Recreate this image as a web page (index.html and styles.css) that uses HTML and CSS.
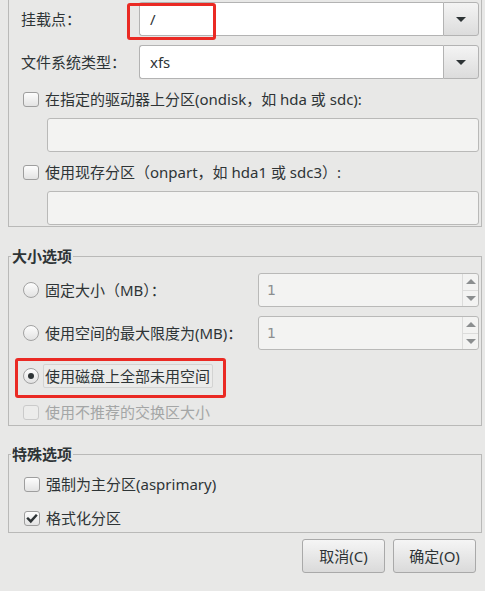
FILE: index.html
```html
<!DOCTYPE html>
<html lang="zh-CN">
<head>
<meta charset="utf-8">
<title>添加挂载点</title>
<link rel="stylesheet" href="styles.css">
</head>
<body>
<div class="frame-top">
  <div class="field-row">
    <span class="label">挂载点：</span>
    <div class="combo">
      <div class="combo-entry">/</div>
      <div class="combo-btn"><span class="tri-down"></span></div>
      <div class="annot annot-mount"></div>
    </div>
  </div>
  <div class="field-row gap9">
    <span class="label">文件系统类型：</span>
    <div class="combo">
      <div class="combo-entry">xfs</div>
      <div class="combo-btn"><span class="tri-down"></span></div>
    </div>
  </div>
  <div class="check-row gap10">
    <span class="check"></span>
    <span>在指定的驱动器上分区(ondisk，如 hda 或 sdc):</span>
  </div>
  <div class="entry gap9"></div>
  <div class="check-row gap10">
    <span class="check"></span>
    <span>使用现存分区（onpart，如 hda1 或 sdc3）:</span>
  </div>
  <div class="entry gap9"></div>
</div>

<fieldset class="group group-size">
  <legend>大小选项</legend>
  <div class="group-body size-body">
    <div class="size-row">
      <div class="radio-row"><span class="radio"></span><span>固定大小（MB）：</span></div>
      <div class="spin"><span class="spin-val">1</span><div class="spin-btns"><span class="spin-up"><span class="tri-up"></span></span><span class="spin-dn"><span class="tri-dn-grey"></span></span></div></div>
    </div>
    <div class="size-row gap9">
      <div class="radio-row"><span class="radio"></span><span>使用空间的最大限度为(MB)：</span></div>
      <div class="spin"><span class="spin-val">1</span><div class="spin-btns"><span class="spin-up"><span class="tri-up"></span></span><span class="spin-dn"><span class="tri-dn-grey"></span></span></div></div>
    </div>
    <div class="radio-row sel-row gap14">
      <span class="radio checked"></span><span class="focus-label">使用磁盘上全部未用空间</span>
      <div class="annot annot-radio"></div>
    </div>
    <div class="check-row disabled gap14">
      <span class="check"></span>
      <span>使用不推荐的交换区大小</span>
    </div>
  </div>
</fieldset>

<fieldset class="group group-special">
  <legend>特殊选项</legend>
  <div class="group-body special-body">
    <div class="check-row">
      <span class="check"></span>
      <span>强制为主分区(asprimary)</span>
    </div>
    <div class="check-row gap14">
      <span class="check"><svg width="15" height="15" viewBox="0 0 15 15"><path d="M3.2 7.6 L6.2 10.6 L11.8 4.4" fill="none" stroke="#2e3436" stroke-width="2.6" stroke-linecap="square"/></svg></span>
      <span>格式化分区</span>
    </div>
  </div>
</fieldset>

<div class="buttons">
  <button class="btn">取消(C)</button>
  <button class="btn">确定(O)</button>
</div>
</body>
</html>
```

FILE: styles.css
```css
html, body {
  margin: 0;
  padding: 0;
}
body {
  background: #e8e8e7;
  color: #2e3436;
  font-family: "Noto Sans", "Noto Sans CJK SC", sans-serif;
  font-size: 15px;
  line-height: 18px;
  width: 485px;
  height: 591px;
  overflow: hidden;
}

.gap9 { margin-top: 9px; }
.gap10 { margin-top: 10px; }
.gap14 { margin-top: 14px; }

/* top frame */
.frame-top {
  box-sizing: border-box;
  width: 474px;
  margin-left: 8px;
  border: 1px solid #b9b9b8;
  border-top: none;
  padding: 2px 2px 1px 12px;
}
.field-row {
  display: grid;
  grid-template-columns: 118px 1fr;
  align-items: center;
  height: 34px;
}
.combo {
  position: relative;
  display: flex;
  height: 34px;
}
.combo-entry {
  flex: 1;
  box-sizing: border-box;
  background: #ffffff;
  border: 1px solid #b3b3b3;
  border-right: none;
  border-radius: 3px 0 0 3px;
  padding-left: 10px;
  display: flex;
  align-items: center;
}
.combo-btn {
  box-sizing: border-box;
  width: 36px;
  border: 1px solid #b3b3b3;
  border-radius: 0 3px 3px 0;
  background: linear-gradient(#f4f4f4, #dcdcdc);
  display: flex;
  align-items: center;
  justify-content: center;
}
.tri-down {
  width: 0;
  height: 0;
  border-left: 5px solid transparent;
  border-right: 5px solid transparent;
  border-top: 5px solid #2e3436;
}

.annot {
  position: absolute;
  border: 3px solid #ea2a24;
  border-radius: 3px;
  box-sizing: border-box;
  pointer-events: none;
}
.annot-mount {
  left: -12px;
  top: 1px;
  width: 89px;
  height: 37px;
}

.check-row {
  display: flex;
  align-items: center;
  height: 20px;
  white-space: nowrap;
}
.check {
  box-sizing: border-box;
  width: 16px;
  height: 15px;
  margin: 0 6px 0 2px;
  border: 1px solid #9e9e9e;
  border-radius: 3px;
  background: linear-gradient(#fdfdfd, #e3e3e3);
  display: flex;
  align-items: center;
  justify-content: center;
  flex: none;
}
.check svg { display: block; }

.entry {
  box-sizing: border-box;
  height: 34px;
  margin-left: 26px;
  background: #f3f3f2;
  border: 1px solid #b9b9b8;
  border-radius: 3px;
}

/* group frames */
.group {
  box-sizing: border-box;
  width: 474px;
  margin: 0 0 0 8px;
  min-inline-size: 0;
  border: 1px solid #b9b9b8;
  padding: 0 2px 0 2px;
}
.group legend {
  font-weight: bold;
  padding: 0 1px;
  line-height: 18px;
  color: #2e3436;
}
.group-size { margin-top: 20px; }
.group-special { margin-top: 19px; }

.group-body { padding-left: 10px; }
.size-body { padding-top: 8px; padding-bottom: 3px; }
.special-body { padding-top: 11px; padding-bottom: 4px; padding-left: 13px; }
.special-body .check { margin-left: 0; margin-right: 6px; }

.size-row {
  display: grid;
  grid-template-columns: 1fr 221px;
  align-items: center;
  height: 34px;
}
.radio-row {
  display: flex;
  align-items: center;
  white-space: nowrap;
}
.sel-row {
  position: relative;
  height: 24px;
}
.radio {
  box-sizing: border-box;
  width: 16px;
  height: 16px;
  margin: 0 6px 0 2px;
  border: 1px solid #a2a2a2;
  border-radius: 50%;
  background: linear-gradient(#fdfdfd, #e2e2e2);
  flex: none;
  display: flex;
  align-items: center;
  justify-content: center;
}
.radio.checked::after {
  content: "";
  width: 6px;
  height: 6px;
  border-radius: 50%;
  background: #2e3436;
}
.focus-label {
  box-sizing: border-box;
  margin-left: -2px;
  height: 24px;
  padding: 0 2px 0 1px;
  border: 1px solid #d3d3d2;
  border-radius: 2px;
  background: #ebebea;
  display: flex;
  align-items: center;
}
.annot-radio {
  left: -6px;
  top: -6px;
  width: 211px;
  height: 40px;
}

.disabled { color: #a4a6a6; }
.disabled .check {
  border-color: #cacaca;
  background: #ececeb;
}

.spin {
  box-sizing: border-box;
  height: 34px;
  display: flex;
  background: #f3f3f2;
  border: 1px solid #b9b9b8;
  border-radius: 3px;
}
.spin-val {
  flex: 1;
  padding-left: 8px;
  display: flex;
  align-items: center;
  color: #8b8e8f;
  font-family: "DejaVu Sans", sans-serif;
  font-size: 14px;
}
.spin-btns {
  width: 15px;
  border-left: 1px solid #dcdcdb;
  display: flex;
  flex-direction: column;
}
.spin-up, .spin-dn {
  flex: 1;
  display: flex;
  align-items: center;
  justify-content: center;
}
.spin-up { border-bottom: 1px solid #dcdcdb; }
.tri-up {
  width: 0;
  height: 0;
  border-left: 5px solid transparent;
  border-right: 5px solid transparent;
  border-bottom: 5px solid #8b8e8f;
}
.tri-dn-grey {
  width: 0;
  height: 0;
  border-left: 5px solid transparent;
  border-right: 5px solid transparent;
  border-top: 5px solid #8b8e8f;
}

.buttons {
  display: flex;
  justify-content: flex-end;
  gap: 8px;
  padding-right: 9px;
  margin-top: 6px;
}
.btn {
  box-sizing: border-box;
  width: 83px;
  height: 34px;
  font: inherit;
  color: #2e3436;
  border: 1px solid #a9a9a9;
  border-radius: 3px;
  background: linear-gradient(#f5f5f5, #dadada);
  padding: 0;
}
```
